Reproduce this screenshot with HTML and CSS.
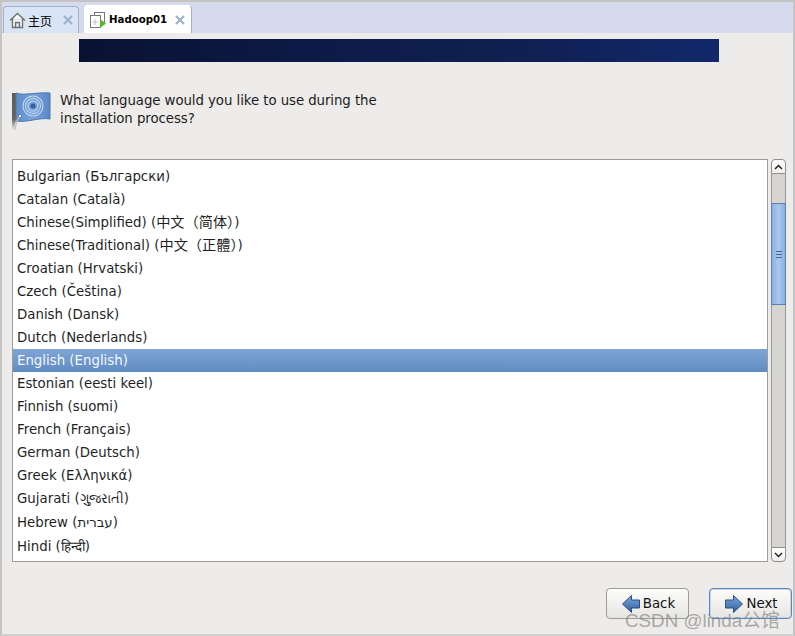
FILE: index.html
```html
<!DOCTYPE html>
<html lang="en">
<head>
<meta charset="utf-8">
<title>Hadoop01</title>
<link rel="stylesheet" href="styles.css">
</head>
<body>
<div class="window">
  <div class="tabbar">
    <div class="tab tab-home">
      <svg class="tab-icon" width="17" height="17" viewBox="0 0 17 17"><path d="M1 8.500 8.500 1.500 16 8.500M3.500 6.500V15.500H13.500V6.500M6.500 15.500V10.500H10.500V15.500" fill="#fff" stroke="#707070" stroke-width="1.400"/></svg>
      <span class="tab-label">主页</span>
      <svg class="tab-close" width="10" height="10" viewBox="0 0 10 10"><path d="M1 1 9 9M9 1 1 9" stroke="#9db4cc" stroke-width="2.400"/></svg>
    </div>
    <div class="tab tab-active">
      <svg class="tab-icon vm" width="18" height="18" viewBox="0 0 18 18"><rect x="5.500" y="1.500" width="10" height="10" fill="#fff" stroke="#777"/><rect x="1.500" y="4.500" width="10" height="12" fill="#fff" stroke="#777"/><path d="M6 8v6M3.500 11h5" stroke="#bbb"/><path d="M11 8 17 12.500 11 17Z" fill="#5cb531"/></svg>
      <span class="tab-label bold">Hadoop01</span>
      <svg class="tab-close" width="10" height="10" viewBox="0 0 10 10"><path d="M1 1 9 9M9 1 1 9" stroke="#9db4cc" stroke-width="2.400"/></svg>
    </div>
  </div>
  <div class="content">
    <div class="banner"></div>
    <div class="question">
      <svg class="flag" width="40" height="42" viewBox="0 0 40 42">
        <defs>
          <linearGradient id="pole" x1="0" y1="0" x2="0" y2="1"><stop offset="0" stop-color="#5d5d57"/><stop offset="0.700" stop-color="#66665f"/><stop offset="1" stop-color="#ecebe9"/></linearGradient>
          <linearGradient id="cloth" x1="0" y1="0" x2="1" y2="0"><stop offset="0" stop-color="#5b8ccb"/><stop offset="0.500" stop-color="#79a3da"/><stop offset="1" stop-color="#5888c8"/></linearGradient>
        </defs>
        <path d="M0 3H4V30L2 40 0 40Z" fill="url(#pole)"/>
        <path d="M4 3C12 6 24 2 38 3V29C27 27 15 33 4 31Z" fill="url(#cloth)" stroke="#4a78ad"/>
        <g fill="none" stroke="#c6d9f0" stroke-width="1.100">
          <circle cx="21" cy="16" r="10"/><circle cx="21" cy="16" r="7.500"/><circle cx="21" cy="16" r="5"/>
        </g>
        <circle cx="21" cy="16" r="2.500" fill="#34609a"/>
        <circle cx="8" cy="26" r="1.700" fill="#e4ecf5" stroke="#445"  stroke-width="0.500"/>
        <path d="M7 27C5 30 4 34 3 40" fill="none" stroke="#c4c4c0" stroke-width="1.200"/>
      </svg>
      <p class="question-text">What language would you like to use during the<br>installation process?</p>
    </div>
    <div class="picker">
      <ul class="list">
        <li>Bulgarian (Български)</li>
        <li>Catalan (Català)</li>
        <li>Chinese(Simplified) (<span class="cjk">中文（简体）</span>)</li>
        <li>Chinese(Traditional) (<span class="cjk">中文（正體）</span>)</li>
        <li>Croatian (Hrvatski)</li>
        <li>Czech (Čeština)</li>
        <li>Danish (Dansk)</li>
        <li>Dutch (Nederlands)</li>
        <li class="selected">English (English)</li>
        <li>Estonian (eesti keel)</li>
        <li>Finnish (suomi)</li>
        <li>French (Français)</li>
        <li>German (Deutsch)</li>
        <li>Greek (Ελληνικά)</li>
        <li>Gujarati (ગુજરાતી)</li>
        <li class="tall">Hebrew (עברית)</li>
        <li class="tall">Hindi (हिन्दी)</li>
      </ul>
      <div class="scrollbar">
        <div class="sb-btn sb-up"><svg width="9" height="6" viewBox="0 0 9 6"><path d="M1 5 4.500 1.500 8 5" fill="none" stroke="#222" stroke-width="1.500"/></svg></div>
        <div class="sb-track">
          <div class="sb-thumb"><span class="grip"></span><span class="grip"></span><span class="grip"></span></div>
        </div>
        <div class="sb-btn sb-down"><svg width="9" height="6" viewBox="0 0 9 6"><path d="M1 1 4.500 4.500 8 1" fill="none" stroke="#222" stroke-width="1.500"/></svg></div>
      </div>
    </div>
    <div class="actions">
      <button class="btn"><svg width="18" height="18" viewBox="0 0 18 18"><defs><linearGradient id="arrow" x1="0" y1="0" x2="0" y2="1"><stop offset="0" stop-color="#7fa8da"/><stop offset="1" stop-color="#2f5f9f"/></linearGradient></defs><path d="M.500 9 9.500 .500V5H17.500V13H9.500V17.500Z" fill="url(#arrow)" stroke="#2a4f80"/></svg>Back</button>
      <button class="btn btn-default"><svg width="18" height="18" viewBox="0 0 18 18"><path d="M17.500 9 8.500 .500V5H.500V13H8.500V17.500Z" fill="url(#arrow)" stroke="#2a4f80"/></svg>Next</button>
    </div>
  </div>
  <div class="watermark">CSDN @linda公馆</div>
</div>
</body>
</html>
```
FILE: styles.css
```css
* { box-sizing: border-box; }
html, body { margin: 0; padding: 0; }
body { width: 795px; height: 636px; overflow: hidden; font-family: "DejaVu Sans", "Noto Sans CJK SC", sans-serif; color: #1a1a1a; }
.window { position: relative; width: 795px; height: 636px; display: flex; flex-direction: column; background: #edecea; border-top: 2px solid #c4c4c4; border-left: 2px solid #c4c4c4; border-right: 2px solid #c4c4c4; border-bottom: 2px solid #d0d0d0; }
.tabbar { height: 31px; background: #d5dbec; display: flex; align-items: flex-end; gap: 5px; padding-left: 1px; flex-shrink: 0; }
.tab { display: flex; align-items: center; height: 27px; border: 1px solid #9cb3cd; border-bottom: 0; border-radius: 4px 4px 0 0; font-size: 12px; color: #000; }
.tab-home { width: 76px; background: #d9e5f4; padding-left: 5px; }
.tab-active { width: 108px; height: 28px; background: #fff; padding-left: 4px; border-top-color: #fff; border-left-color: #fff; }
.tab-icon { flex-shrink: 0; }
.tab-label { margin-left: 2px; font-family: "Noto Sans CJK SC", "DejaVu Sans", sans-serif; }
.tab-label.bold { font-family: "DejaVu Sans", sans-serif; font-weight: 700; font-size: 10.200px; margin-left: 2px; width: 60px; }
.tab-home .tab-label { width: 25px; }
.tab-close { margin-left: 10px; flex-shrink: 0; }
.tab-active .tab-close { margin-left: 6px; }
.content { flex: 1; display: flex; flex-direction: column; padding: 6px 0 0 10px; min-height: 0; }
.banner { width: 640px; height: 23px; margin-left: 67px; background: linear-gradient(90deg, #0a1233 0%, #0d1b48 40%, #0f2052 70%, #12286a 100%); }
.question { display: flex; align-items: flex-start; height: 66px; margin-top: 28px; }
.flag { flex-shrink: 0; margin-right: 8px; }
.question-text { margin: 2px 0 0; font-size: 13.330px; letter-spacing: -0.070px; line-height: 18px; width: 340px; color: #1c1c1c; }
.picker { display: flex; height: 403px; margin-top: 3px; gap: 3px; }
.list { list-style: none; margin: 0; padding: 5px 0 0; width: 756px; height: 403px; background: #fff; border: 1px solid #9d9c98; overflow: hidden; }
.list li { height: 23px; line-height: 23px; padding-left: 4px; font-size: 13.330px; color: #1f1f1f; white-space: nowrap; }
.list li.tall { height: 24px; padding-top: 1px; }
.list li.selected { background: linear-gradient(180deg, #7fa5d6 0%, #5f8cc0 100%); color: #f4f6fa; }
.cjk { font-size: 14.200px; }
.scrollbar { width: 15px; display: flex; flex-direction: column; height: 403px; }
.sb-btn { height: 15px; background: linear-gradient(180deg, #fff, #f0efed); border: 1px solid #8f8e8b; display: flex; align-items: center; justify-content: center; flex-shrink: 0; }
.sb-up { border-radius: 4px 4px 0 0; }
.sb-down { border-radius: 0 0 4px 4px; }
.sb-track { flex: 1; background: #d5d4d1; border-left: 1px solid #9a9996; border-right: 1px solid #9a9996; padding-top: 29px; }
.sb-thumb { width: 15px; margin-left: -1px; height: 102px; background: linear-gradient(90deg, #8fb2e2, #a9c6ec 50%, #8eb0df); border: 1px solid #5b81b1; display: flex; flex-direction: column; align-items: center; justify-content: center; gap: 2px; }
.grip { display: block; width: 6px; height: 1px; background: #46699a; }
.actions { display: flex; justify-content: flex-end; gap: 20px; padding: 26px 1px 0 0; }
.btn { width: 83px; height: 31px; padding: 0 0 0 2px; display: flex; align-items: center; justify-content: center; gap: 3px; border: 1px solid #9d9c98; border-radius: 4px; background: linear-gradient(180deg, #fdfdfc 0%, #e6e5e2 100%); font-family: "DejaVu Sans", sans-serif; font-size: 13.330px; color: #111; }
.btn-default { border: 1px solid #5f86b8; box-shadow: inset 0 0 0 1px #c3d5ea; }
.watermark { position: absolute; left: 623px; top: 603px; font-family: "Liberation Sans", "Noto Sans CJK SC", sans-serif; font-size: 18.800px; color: rgba(120,120,120,0.6); white-space: nowrap; }
```
